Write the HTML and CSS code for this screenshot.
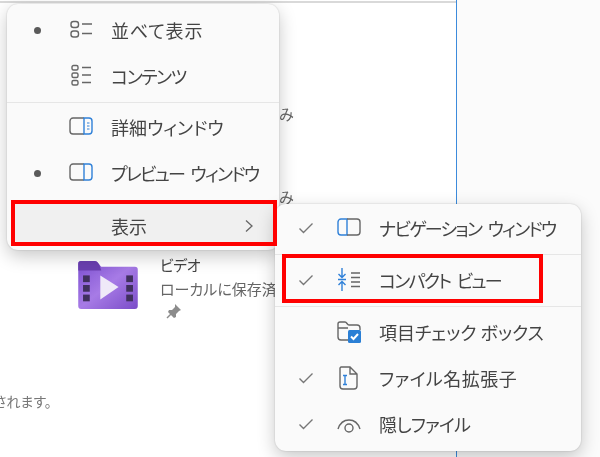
FILE: index.html
```html
<!DOCTYPE html>
<html lang="ja">
  <head>
    <meta charset="UTF-8" />
    <title>表示</title>
    <link rel="stylesheet" href="styles.css">
  </head>

  <body>
    <div class="desk">
      <div class="pane">
        <div class="top-line"></div>
        <p class="frag frag-1">み</p>
        <p class="frag frag-2">み</p>
        <div class="file">
          <svg class="file-icon" width="62" height="48" viewBox="0 0 62 50">
            <defs>
              <linearGradient id="video" x1="0" y1="0" x2="1" y2="1">
                <stop offset="0" stop-color="#7c4fd0" />
                <stop offset="0.5" stop-color="#a77be6" />
                <stop offset="1" stop-color="#7a4cc8" />
              </linearGradient>
            </defs>
            <path d="M0 3a3 3 0 0 1 3-3h14c2 0 3 1 5 4l2 2h35a3 3 0 0 1 3 3v38a3 3 0 0 1-3 3H3a3 3 0 0 1-3-3z" fill="url(#video)" />
            <path d="M0 3a3 3 0 0 1 3-3h14c2 0 3 1 5 4l2 6c-4 0-8 0-24 0z" fill="#6a3fb0" />
            <path d="M23 15l19 12-19 13z" fill="#efe9f8" />
            <g fill="#40305e">
              <rect x="5" y="15" width="7" height="7" />
              <rect x="5" y="25" width="7" height="7" />
              <rect x="5" y="35" width="7" height="7" />
              <rect x="50" y="15" width="7" height="7" />
              <rect x="50" y="25" width="7" height="7" />
              <rect x="50" y="35" width="7" height="7" />
            </g>
          </svg>
          <div class="file-text">
            <div class="file-name">ビデオ</div>
            <div class="file-sub">ローカルに保存済み</div>
            <svg class="pin" width="16" height="16" viewBox="0 0 16 16">
              <path d="M9 1l6 6-2 1-3 3v3l-2 1-6-6 1-2h3l3-3z" fill="#8c8c8c" />
              <path d="M5 11l-4 4" stroke="#8c8c8c" stroke-width="1.4" />
            </svg>
          </div>
        </div>
        <p class="note">されます。</p>
      </div>
      <div class="side"></div>

      <div class="menu menu-main">
        <div class="row">
          <span class="mark"><i class="dot"></i></span>
          <svg class="ico" viewBox="0 0 24 24">
            <rect x="2" y="3.500" width="7.500" height="6" rx="2.500" />
            <rect x="2" y="13" width="7.500" height="6" rx="2.500" />
            <path d="M13 6h10M13 15.500h10" />
          </svg>
          <span class="label wide">並べて表示</span>
        </div>
        <div class="row">
          <span class="mark"></span>
          <svg class="ico" viewBox="0 0 24 24">
            <rect x="3" y="1.500" width="6" height="4.500" rx="1.500" />
            <rect x="3" y="9" width="6" height="4.500" rx="1.500" />
            <rect x="3" y="16.500" width="6" height="4.500" rx="1.500" />
            <path d="M13 3.500h9M13 11h9M13 18.500h9" />
          </svg>
          <span class="label tight">コンテンツ</span>
        </div>
        <div class="sep"></div>
        <div class="row">
          <span class="mark"></span>
          <svg class="ico" viewBox="0 0 24 24">
            <path d="M15 3H4a3 3 0 0 0-3 3v10a3 3 0 0 0 3 3h11" />
            <path class="blue" d="M15 3h5a3 3 0 0 1 3 3v10a3 3 0 0 1-3 3h-5z" />
            <path class="blue thin" d="M18 8h2.500M18 11h2.500M18 14h2.500" />
          </svg>
          <span class="label">詳細ウィンドウ</span>
        </div>
        <div class="row">
          <span class="mark"><i class="dot"></i></span>
          <svg class="ico" viewBox="0 0 24 24">
            <path d="M15 3H4a3 3 0 0 0-3 3v10a3 3 0 0 0 3 3h11" />
            <path class="blue" d="M15 3h5a3 3 0 0 1 3 3v10a3 3 0 0 1-3 3h-5z" />
          </svg>
          <span class="label spaced">プレビュー ウィンドウ</span>
        </div>
        <div class="row row-show">
          <span class="label">表示</span>
          <svg class="chev" width="10" height="14" viewBox="0 0 10 14"><path d="M2 1.500l6 5.500-6 5.500" /></svg>
        </div>
      </div>

      <div class="menu menu-sub">
        <div class="row">
          <span class="mark"><svg class="check" width="16" height="12" viewBox="0 0 16 12"><path d="M1.500 6.500l4 4 9-9" /></svg></span>
          <svg class="ico" viewBox="0 0 24 24">
            <path class="blue" d="M10 3H4a3 3 0 0 0-3 3v10a3 3 0 0 0 3 3h6z" />
            <path d="M10 3h10a3 3 0 0 1 3 3v10a3 3 0 0 1-3 3H10" />
          </svg>
          <span class="label spaced">ナビゲーション ウィンドウ</span>
        </div>
        <div class="sep"></div>
        <div class="row">
          <span class="mark"><svg class="check" width="16" height="12" viewBox="0 0 16 12"><path d="M1.500 6.500l4 4 9-9" /></svg></span>
          <svg class="ico" viewBox="0 0 24 24">
            <path class="blue" d="M5 0v9M1.500 6L5 9.500 8.500 6M1 11.500h8M5 23v-9M1.500 17L5 13.500 8.500 17" />
            <path d="M14 5h9M14 9.500h9M14 14h9M14 18.500h9" />
          </svg>
          <span class="label spaced">コンパクト ビュー</span>
        </div>
        <div class="sep"></div>
        <div class="row">
          <span class="mark"></span>
          <svg class="ico" viewBox="0 0 24 24">
            <path d="M11 20H4a3 3 0 0 1-3-3V4a2 2 0 0 1 2-2h5c2 0 2 3 4 3h8a3 3 0 0 1 3 3v2M1 8h10" />
            <rect class="fill-blue" x="11" y="10" width="13" height="13" rx="1.500" />
            <path class="white" d="M14 16.500l2.500 2.500 4.500-5" />
          </svg>
          <span class="label">項目チェック ボックス</span>
        </div>
        <div class="row">
          <span class="mark"><svg class="check" width="16" height="12" viewBox="0 0 16 12"><path d="M1.500 6.500l4 4 9-9" /></svg></span>
          <svg class="ico" viewBox="0 0 24 24">
            <path d="M4 1h9l7 7v12a3 3 0 0 1-3 3H6a3 3 0 0 1-3-3V2zM13 1v7h7" />
            <path class="blue" d="M6 9.500h4M8 9.500v9M6 18.500h4" />
          </svg>
          <span class="label roomy">ファイル名拡張子</span>
        </div>
        <div class="row">
          <span class="mark"><svg class="check" width="16" height="12" viewBox="0 0 16 12"><path d="M1.500 6.500l4 4 9-9" /></svg></span>
          <svg class="ico" viewBox="0 0 24 24">
            <path d="M1 17c2-6 6-9 11-9s9 3 11 9" />
            <circle cx="12" cy="16" r="4" />
          </svg>
          <span class="label snug">隠しファイル</span>
        </div>
      </div>

      <div class="callout callout-show"></div>
      <div class="callout callout-compact"></div>
    </div>
  </body>
</html>
```

FILE: styles.css
```css
html, body {
  margin: 0;
  height: 100%;
  background: #fff;
}
.desk {
  position: relative;
  display: flex;
  width: 600px;
  height: 457px;
  overflow: hidden;
  color: #444;
  font-family: "Noto Sans CJK JP", "Noto Sans", sans-serif;
  font-size: 18px;
  font-feature-settings: "palt";
}
.pane {
  position: relative;
  width: 456px;
  border-right: 1px solid #3c8bdc;
  filter: blur(0.35px);
}
.side {
  flex: 1;
  background: #fbfbfb;
}
.top-line {
  height: 2px;
  margin-top: 1px;
  background: #d9d9d9;
}
.frag {
  position: absolute;
  left: 279px;
  margin: 0;
  color: #666;
  font-size: 15px;
}
.frag-1 { top: 103px; }
.frag-2 { top: 186px; }
.file {
  display: flex;
  gap: 21px;
  margin: 252px 0 0 77px;
}
.file-icon {
  margin-top: 6px;
}
.file-name {
  color: #444;
  font-size: 15px;
  line-height: 20px;
  letter-spacing: -0.5px;
}
.file-sub {
  margin-top: 3px;
  color: #666;
  font-size: 15px;
  line-height: 22px;
  white-space: nowrap;
}
.pin {
  display: block;
  margin: 3px 0 0 6px;
}
.note {
  position: absolute;
  left: -6px;
  top: 391px;
  margin: 0;
  color: #777;
  font-size: 14px;
}
.menu {
  position: absolute;
  box-sizing: border-box;
  background: #fafafa;
  border-radius: 11px;
  box-shadow: 0 6px 18px rgba(0, 0, 0, 0.22), 0 0 2px rgba(0, 0, 0, 0.2);
  filter: blur(0.35px);
}
.menu-main {
  left: 7px;
  top: 4px;
  width: 272px;
  height: 246px;
  padding-top: 3px;
}
.menu-sub {
  left: 275px;
  top: 204px;
  width: 306px;
  height: 247px;
  padding-top: 1px;
}
.row {
  display: flex;
  align-items: center;
  height: 46px;
}
.mark {
  display: flex;
  justify-content: center;
  flex: none;
  width: 62px;
}
.dot {
  width: 7px;
  height: 7px;
  margin-right: 2px;
  border-radius: 50%;
  background: #5a5a5a;
}
.check {
  fill: none;
  stroke: #777;
  stroke-width: 1.4;
}
.ico {
  flex: none;
  width: 24px;
  height: 24px;
  fill: none;
  stroke: #666;
  stroke-width: 1.4;
}
.ico .blue {
  stroke: #2f80d8;
}
.ico .thin {
  stroke-width: 1;
}
.ico .fill-blue {
  fill: #2a7fd5;
  stroke: none;
}
.ico .white {
  stroke: #fff;
  stroke-width: 2;
}
.label {
  margin-left: 18px;
  white-space: nowrap;
}
.wide { letter-spacing: 0.8px; }
.roomy { letter-spacing: 0.5px; }
.snug { letter-spacing: -0.7px; }
.tight { letter-spacing: -1.45px; }
.spaced {
  letter-spacing: -1.75px;
  word-spacing: 4px;
}
.sep {
  height: 1px;
  margin: 3px 0 2px;
  background: #e6e6e6;
}
.menu-main .sep {
  margin-bottom: 1px;
}
.row-show {
  box-sizing: border-box;
  justify-content: space-between;
  height: 44px;
  margin: 6px 6px 0;
  padding-top: 4px;
  background: #f0f0f0;
  border-radius: 4px;
}
.row-show .label {
  margin-left: 98px;
}
.chev {
  margin-right: 19px;
  fill: none;
  stroke: #666;
  stroke-width: 1.3;
}
.callout {
  position: absolute;
  box-sizing: border-box;
  border: 4px solid #f00;
}
.callout-show {
  left: 11px;
  top: 200px;
  width: 266px;
  height: 46px;
}
.callout-compact {
  left: 282px;
  top: 254px;
  width: 261px;
  height: 49px;
}
```
